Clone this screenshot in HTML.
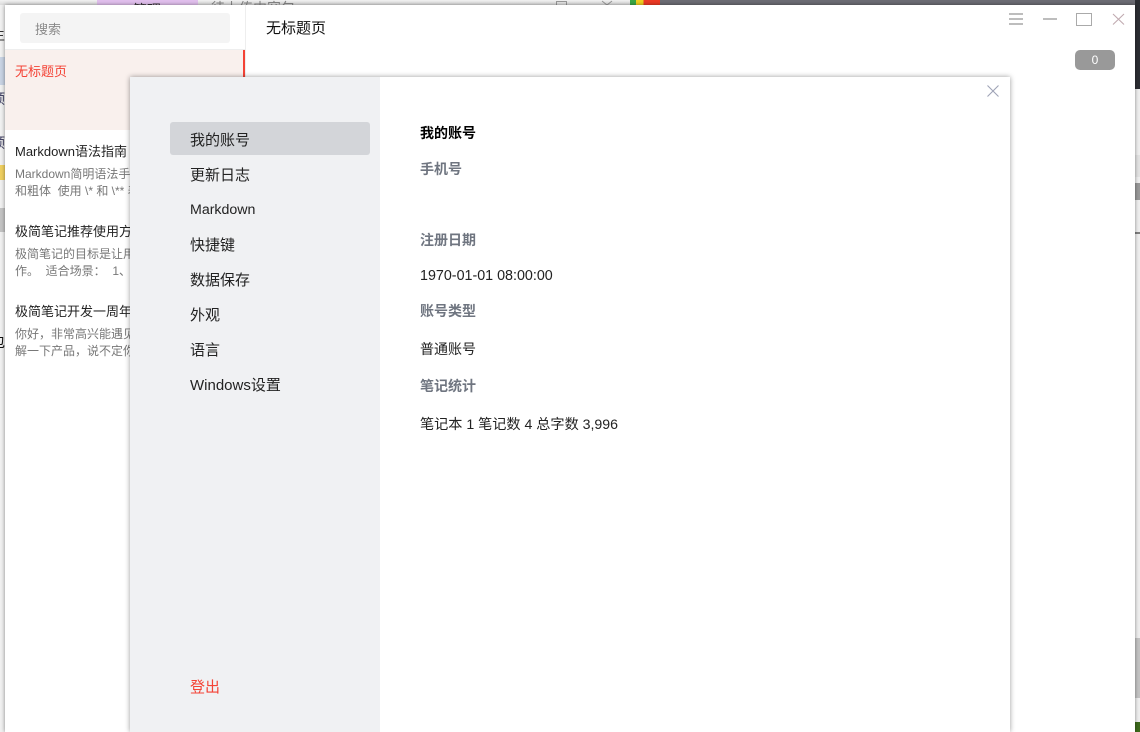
<!DOCTYPE html>
<html lang="zh-CN">
<head>
<meta charset="utf-8">
<title>无标题页</title>
<style>
html,body{margin:0;padding:0;width:1140px;height:732px;overflow:hidden;background:#f1f1f1;font-family:"Liberation Sans","Noto Sans CJK SC",sans-serif;font-size:14px;color:#222}
.a{position:absolute;white-space:nowrap}
.t{position:absolute;white-space:nowrap;line-height:20px}
</style>
</head>
<body>
<!-- background desktop strips -->
<div class="a" style="left:0;top:0;width:660px;height:5px;background:linear-gradient(#f2f2f2,#dcdcdc)"></div>
<div class="a" style="left:97px;top:0;width:101px;height:5px;background:#e2c0ee"></div>
<div class="t" style="left:133px;top:0;font-size:14px;color:#333">管理</div>
<div class="t" style="left:211px;top:-2px;font-size:14px;color:#888">待上传内容包</div>
<div class="a" style="left:556px;top:1px;width:9px;height:6px;border:1px solid #999"></div>
<svg class="a" style="left:600px;top:0" width="14" height="5" viewBox="0 0 14 5" fill="none" stroke="#999"><path d="M2 1L7 5L12 1"/></svg>
<div class="a" style="left:630px;top:0;width:30px;height:5px;background:linear-gradient(90deg,#3aa845 0 20%,#f0d020 20% 45%,#ee3a24 45%)"></div>
<div class="a" style="left:660px;top:0;width:480px;height:5px;background:#6c6c74"></div>
<div class="a" style="left:1135px;top:0;width:5px;height:89px;background:#2c2e34"></div>
<div class="a" style="left:1135px;top:89px;width:5px;height:643px;background:#f0f0f0"></div>
<div class="a" style="left:1135px;top:155px;width:5px;height:22px;background:#e4e4e4"></div>
<div class="a" style="left:1135px;top:183px;width:5px;height:17px;background:#999"></div>
<div class="a" style="left:1135px;top:232px;width:5px;height:2px;background:#808080"></div>
<div class="a" style="left:1135px;top:638px;width:5px;height:60px;background:#c4c4c4"></div>
<div class="a" style="left:1135px;top:722px;width:5px;height:10px;background:#3d6a1c"></div>
<div class="a" style="left:0;top:57px;width:5px;height:28px;background:#c9d3e4"></div>
<div class="a" style="left:0;top:165px;width:5px;height:15px;background:#f0d060"></div>
<div class="a" style="left:0;top:208px;width:5px;height:24px;background:#c4c4c4"></div>
<div class="t" style="left:-9px;top:25px;color:#333">主</div>
<div class="t" style="left:-9px;top:89px;color:#446">预</div>
<div class="t" style="left:-9px;top:133px;color:#446">预</div>
<div class="t" style="left:-9px;top:332px;color:#111">包</div>

<!-- main window -->
<div class="a" style="left:5px;top:5px;width:1130px;height:727px;background:#fff;box-shadow:0 0 4px rgba(0,0,0,.45)"></div>

<!-- sidebar -->
<div class="a" style="left:245px;top:5px;width:1px;height:727px;background:#eee"></div>
<div class="a" style="left:20px;top:13px;width:210px;height:30px;background:#f4f4f4;border-radius:3px"></div>
<div class="t" style="left:35px;top:20px;font-size:13px;color:#8a8a8a">搜索</div>
<div class="a" style="left:5px;top:49px;width:240px;height:1px;background:#eee"></div>
<div class="a" style="left:5px;top:50px;width:238px;height:80px;background:#f9f0ed"></div>
<div class="a" style="left:243px;top:50px;width:2px;height:80px;background:#f44336"></div>
<div class="t" style="left:15px;top:62px;font-size:13px;color:#f44336">无标题页</div>

<div class="t" style="left:15px;top:142px;font-size:13px;color:#222">Markdown语法指南</div>
<div class="t" style="left:15px;top:166px;font-size:12px;line-height:17px;color:#777">Markdown简明语法手<br>和粗体&nbsp; 使用 \* 和 \** 表</div>
<div class="t" style="left:15px;top:222px;font-size:13px;color:#222">极简笔记推荐使用方</div>
<div class="t" style="left:15px;top:246px;font-size:12px;line-height:17px;color:#777">极简笔记的目标是让用<br>作。&nbsp; 适合场景：&nbsp; 1、</div>
<div class="t" style="left:15px;top:302px;font-size:13px;color:#222">极简笔记开发一周年</div>
<div class="t" style="left:15px;top:326px;font-size:12px;line-height:17px;color:#777">你好，非常高兴能遇见<br>解一下产品，说不定你</div>

<!-- title bar -->
<div class="t" style="left:266px;top:19px;font-size:15px;color:#111">无标题页</div>
<svg class="a" style="left:1005px;top:10px" width="130" height="20" viewBox="0 0 130 20" fill="none" stroke="#bdbdbd">
<path d="M4 4H18M4 9H18M4 14H18" stroke-width="2"/>
<path d="M38 9H52" stroke-width="2"/>
<rect x="71.5" y="3.5" width="15" height="12" stroke="#aaa" stroke-width="1"/>
<path d="M108 4L119 14.5M119 4L108 14.5" stroke="#c0aab0" stroke-width="1.1"/>
</svg>
<div class="a" style="left:1075px;top:50px;width:40px;height:20px;background:#999;border-radius:5px;color:#fff;font-size:12px;line-height:20px;text-align:center">0</div>

<!-- modal -->
<div class="a" style="left:130px;top:77px;width:880px;height:655px;background:#fff;box-shadow:0 0 5px rgba(0,0,0,.4)"></div>
<div class="a" style="left:130px;top:77px;width:250px;height:655px;background:#f0f1f3"></div>
<div class="a" style="left:170px;top:122px;width:200px;height:33px;background:#d3d5d9;border-radius:3px"></div>
<div class="t" style="left:190px;top:131px;font-size:15px;color:#222">我的账号</div>
<div class="t" style="left:190px;top:166px;font-size:15px;color:#222">更新日志</div>
<div class="t" style="left:190px;top:200px;font-size:14.2px;color:#222">Markdown</div>
<div class="t" style="left:190px;top:236px;font-size:15px;color:#222">快捷键</div>
<div class="t" style="left:190px;top:271px;font-size:15px;color:#222">数据保存</div>
<div class="t" style="left:190px;top:306px;font-size:15px;color:#222">外观</div>
<div class="t" style="left:190px;top:341px;font-size:15px;color:#222">语言</div>
<div class="t" style="left:190px;top:376px;font-size:15px;color:#222">Windows设置</div>
<div class="t" style="left:190px;top:678px;font-size:15px;color:#f44336">登出</div>

<svg class="a" style="left:985px;top:83px" width="16" height="16" viewBox="0 0 16 16" fill="none" stroke="#9fa3b6" stroke-width="1.1">
<path d="M2.5 2.5L13.5 13.5M13.5 2.5L2.5 13.5"/>
</svg>

<div class="t" style="left:420px;top:123px;font-size:14px;font-weight:bold;color:#000">我的账号</div>
<div class="t" style="left:420px;top:159px;font-size:14px;font-weight:bold;color:#6f7580">手机号</div>
<div class="t" style="left:420px;top:230px;font-size:14px;font-weight:bold;color:#6f7580">注册日期</div>
<div class="t" style="left:420px;top:266px;font-size:14.3px;color:#222">1970-01-01 08:00:00</div>
<div class="t" style="left:420px;top:301px;font-size:14px;font-weight:bold;color:#6f7580">账号类型</div>
<div class="t" style="left:420px;top:339px;font-size:14px;color:#222">普通账号</div>
<div class="t" style="left:420px;top:376px;font-size:14px;font-weight:bold;color:#6f7580">笔记统计</div>
<div class="t" style="left:420px;top:414px;font-size:14.15px;color:#222">笔记本 1 笔记数 4 总字数 3,996</div>
</body>
</html>
